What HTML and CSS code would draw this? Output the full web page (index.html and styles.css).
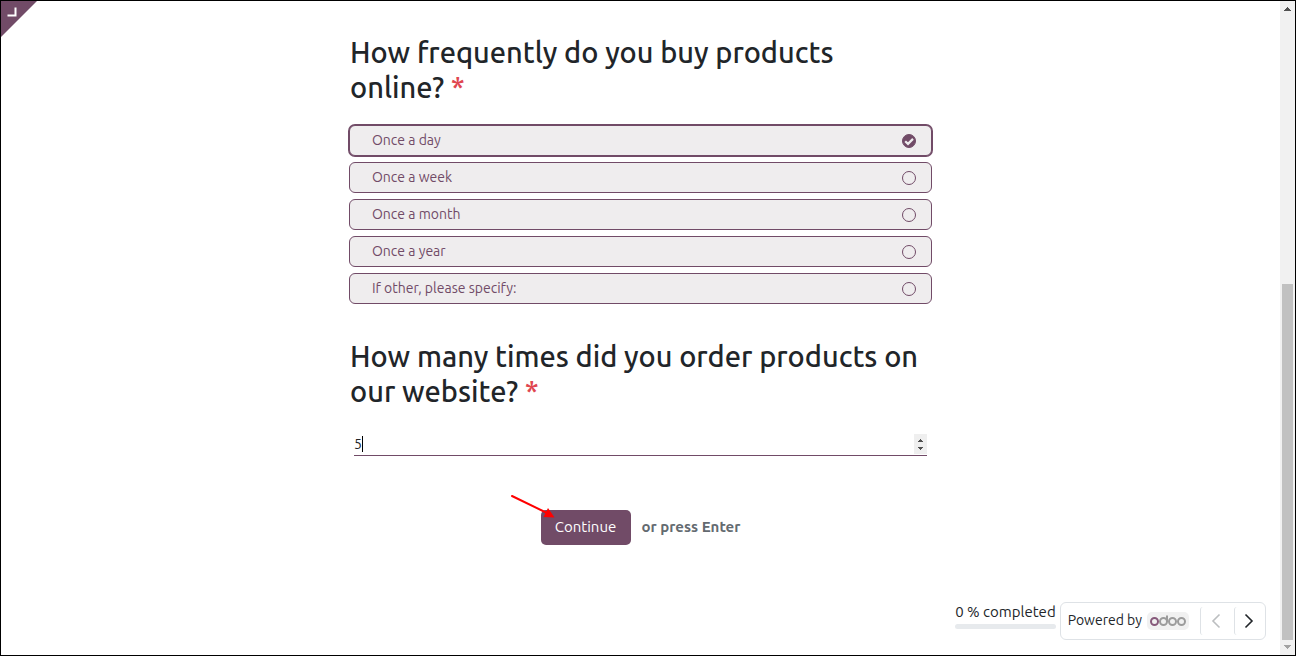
FILE: index.html
```html
<!DOCTYPE html>
<html lang="en">
<head>
<meta charset="utf-8">
<title>Survey</title>
<link rel="stylesheet" href="styles.css">
</head>
<body>
<div class="window">
  <a class="corner" href="#" aria-label="Back to editor">
    <svg width="36" height="36" viewBox="0 0 36 36"><path d="M0 0H36L0 36Z" fill="#714b67"/><path d="M6.500 14.500H14.500V6.500" fill="none" stroke="#fff" stroke-width="2"/></svg>
  </a>
  <div class="page">
    <form class="survey">
      <fieldset class="question">
        <legend class="title">How frequently do you buy products online? <span class="required">*</span></legend>
        <div class="choices">
          <label class="choice selected"><span>Once a day</span><span class="mark"><input type="radio" name="freq" checked><svg class="tick" viewBox="0 0 14 14"><path d="M3.200 7.200L6 9.900L11 4.900" fill="none" stroke="#efedee" stroke-width="2.200"/></svg></span></label>
          <label class="choice"><span>Once a week</span><span class="mark"><input type="radio" name="freq"></span></label>
          <label class="choice"><span>Once a month</span><span class="mark"><input type="radio" name="freq"></span></label>
          <label class="choice"><span>Once a year</span><span class="mark"><input type="radio" name="freq"></span></label>
          <label class="choice"><span>If other, please specify:</span><span class="mark"><input type="radio" name="freq"></span></label>
        </div>
      </fieldset>
      <div class="question">
        <label class="title" for="orders">How many times did you order products on our website? <span class="required">*</span></label>
        <div class="number">
          <input id="orders" type="number" value="5">
          <span class="caret"></span>
          <svg class="spinner" width="13" height="20" viewBox="0 0 13 20" shape-rendering="crispEdges"><path d="M0 0H13V20H0Z" fill="#efefef"/><path d="M4 8V7H5V6H6V5H7V6H8V7H9V8ZM4 13H9V14H8V15H7V16H6V15H5V14H4Z" fill="#505050"/></svg>
        </div>
      </div>
      <div class="actions">
        <button class="continue" type="button">Continue</button>
        <span class="hint">or press Enter</span>
        <svg class="arrow" width="46" height="26" viewBox="0 0 46 26"><path d="M2 2L36 18.500" stroke="#f00" stroke-width="2" stroke-linecap="round"/><path d="M44.500 23.500L38 14L33.500 23Z" fill="#f00"/></svg>
      </div>
    </form>
    <footer class="footer">
      <div class="progress"><span>0 % completed</span><div class="bar"></div></div>
      <div class="nav">
        <span class="powered">Powered by</span>
        <a class="brand" href="#" aria-label="Odoo">
          <svg width="36" height="12" viewBox="0 0 36 12" fill="none" stroke-width="2"><g stroke="#9c9c9c"><circle cx="13.500" cy="6.500" r="3.500"/><path d="M17 0.500V7"/><circle cx="22.500" cy="6.500" r="3.500"/><circle cx="31.500" cy="6.500" r="3.500"/></g><circle cx="4.500" cy="6.500" r="3.500" stroke="#875a7b"/></svg>
        </a>
        <button class="step" type="button" disabled aria-label="Previous"><svg width="10" height="16" viewBox="0 0 10 16"><path d="M8.500 1.500L2 8L8.500 14.500"/></svg></button>
        <button class="step" type="button" aria-label="Next"><svg width="10" height="16" viewBox="0 0 10 16"><path d="M1.500 1.500L8 8L1.500 14.500"/></svg></button>
      </div>
    </footer>
  </div>
  <div class="scrollbar" aria-hidden="true">
    <svg width="15" height="15" viewBox="0 0 15 15" shape-rendering="crispEdges"><path d="M4 10V9H5V8H6V7H7V6H8V7H9V8H10V9H11V10Z" fill="#505050"/></svg>
    <div class="track"><div class="thumb"></div></div>
    <svg width="15" height="15" viewBox="0 0 15 15" shape-rendering="crispEdges"><path d="M4 5H11V6H10V7H9V8H8V9H7V8H6V7H5V6H4Z" fill="#a3a3a3"/></svg>
  </div>
</div>
</body>
</html>
```
FILE: styles.css
```css
* { box-sizing: border-box; }
body {
  margin: 0;
  font-family: Ubuntu, "Noto Sans", sans-serif;
  font-size: 14px;
  line-height: 21px;
  color: #212529;
  background: #fff;
}
input, button { font: inherit; color: inherit; }
.window {
  position: relative;
  display: flex;
  min-height: 100vh;
  border: 1px solid #000;
}
.corner { position: absolute; top: 0; left: 0; }
.corner svg { display: block; }
.page {
  flex: 1;
  display: flex;
  flex-direction: column;
  justify-content: space-between;
  padding: 34px 14px 15px;
}
.survey {
  width: 100%;
  max-width: 583px;
  margin: 0 auto;
}
.question { margin: 0 0 35px; padding: 0; border: 0; }
.title {
  display: block;
  padding: 0 1px;
  font-size: 29px;
  font-weight: 525;
  line-height: 35px;
}
.required { color: #e04650; }
.choices { display: grid; gap: 6px; margin-top: 20px; }
.choice {
  display: flex;
  align-items: center;
  justify-content: space-between;
  height: 31px;
  padding: 0 15px 0 22px;
  border: 1px solid #714b67;
  border-radius: 6px;
  background: #efedee;
  color: #714b67;
}
.choice.selected { box-shadow: 0 0 0 1px #714b67; }
.mark { display: grid; }
.mark input, .tick { grid-area: 1 / 1; width: 14px; height: 14px; margin: 0; }
.mark input {
  appearance: none;
  border: 1px solid #714b67;
  border-radius: 50%;
}
.mark input:checked { background: #714b67; }
.tick { z-index: 1; pointer-events: none; }
.number { position: relative; margin: 23px 5px 0; }
.number input {
  display: block;
  width: 100%;
  height: 24px;
  padding: 0;
  border: 0;
  border-bottom: 1px solid #714b67;
  outline: 0;
  background: transparent;
  appearance: textfield;
}
.caret {
  position: absolute;
  left: 8px;
  top: 4px;
  width: 1px;
  height: 16px;
  background: #000;
}
.spinner { position: absolute; right: 0; top: 2px; }
.actions {
  position: relative;
  display: flex;
  align-items: center;
  justify-content: center;
  gap: 11px;
  margin-top: 54px;
  font-size: 15px;
}
.continue {
  width: 90px;
  height: 35px;
  padding: 0 0 2px;
  border: 0;
  border-radius: 5px;
  background: #714b67;
  color: #fff;
}
.hint { padding-bottom: 3px; font-weight: 700; color: #636a70; }
.arrow { position: absolute; left: 161px; top: -16px; }
.footer {
  display: flex;
  align-items: flex-start;
  justify-content: flex-end;
  gap: 4px;
}
.progress { display: grid; gap: 2px; font-size: 15px; line-height: 20px; }
.bar { height: 5px; border-radius: 3px; background: #e7eaed; }
.nav {
  display: flex;
  align-items: center;
  height: 38px;
  padding-left: 7px;
  border: 1px solid #dee2e6;
  border-radius: 6px;
}
.powered { padding-bottom: 2px; }
.brand {
  display: flex;
  align-items: center;
  height: 18px;
  margin: 0 11px 0 5px;
  padding: 0 3px;
  border-radius: 5px;
  background: #f1f1f1;
}
.step {
  display: grid;
  place-items: center;
  width: 34px;
  height: 28px;
  padding: 0 4px 0 0;
  border: 0;
  border-left: 1px solid #dee2e6;
  border-radius: 3px 0 0 3px;
  background: none;
}
.step:last-child { width: 31px; padding-right: 2px; }
.step svg { fill: none; stroke: #212529; stroke-width: 1.6; }
.step:disabled svg { stroke: #bcbec0; }
.scrollbar {
  display: flex;
  flex-direction: column;
  width: 15px;
  background: #f1f1f1;
}
.track { flex: 1; display: flex; flex-direction: column; justify-content: flex-end; padding: 0 2px; }
.thumb { height: 57%; background: #c1c1c1; }
```
